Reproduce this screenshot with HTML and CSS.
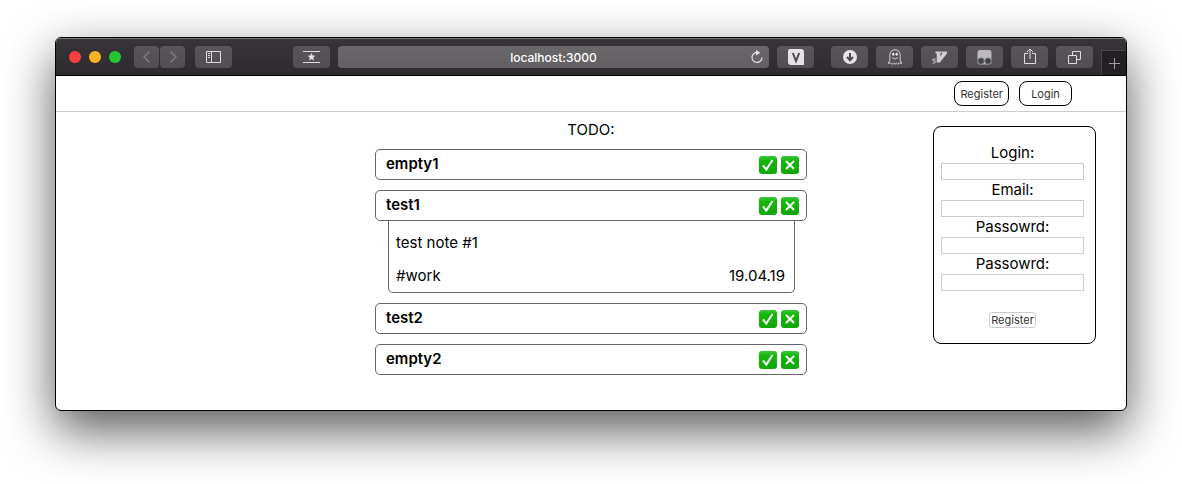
FILE: index.html
```html
<!DOCTYPE html>
<html lang="en">
<head>
<meta charset="utf-8">
<title>TODO</title>
<link rel="stylesheet" href="styles.css">
</head>
<body>
<div class="window">
  <div class="toolbar">
    <div class="lights"><span class="light red"></span><span class="light yellow"></span><span class="light green"></span></div>
    <div class="nav">
      <button class="tool small dim" aria-label="Back"><svg width="8" height="12" viewBox="0 0 8 12"><path d="M6.5 0.5L1 6l5.500 5.500"/></svg></button>
      <button class="tool small dim" aria-label="Forward"><svg width="8" height="12" viewBox="0 0 8 12"><path d="M1.500 0.500L7 6l-5.500 5.500"/></svg></button>
    </div>
    <button class="tool sidebar" aria-label="Sidebar"><svg width="15" height="12" viewBox="0 0 15 12"><path d="M.5.5h14v11H.5zM5.500.500v11M2 2.500h2M2 4.500h2M2 6.500h2"/></svg></button>
    <button class="tool favorites" aria-label="Favorites"><svg width="17" height="12" viewBox="0 0 17 12"><path d="M0 .5h17M0 11.500h17"/><path class="solid" d="M8.500 2l1.100 2.600 2.800.2-2.100 1.800.7 2.800-2.500-1.500L6 9.400l.7-2.800L4.600 4.800l2.800-.2z"/></svg></button>
    <div class="address">
      <span class="url">localhost:3000</span>
      <button class="reload" aria-label="Reload"><svg width="12" height="14" viewBox="0 0 12 14"><path d="M6.500 2.500A5 5 0 1 0 11 7.500"/><path class="solid" d="M5 0l4.500 2.700L5 5.400z"/></svg></button>
    </div>
    <button class="tool" aria-label="V extension"><svg width="16" height="16" viewBox="0 0 16 16"><path class="solid" d="M2 0h11a3 3 0 0 1 3 3v13H3a3 3 0 0 1-3-3V2a2 2 0 0 1 2-2z"/><path class="cut" d="M4.800 4L8 12l3.200-8"/></svg></button>
    <div class="extensions">
      <button class="tool" aria-label="Downloads"><svg width="14" height="14" viewBox="0 0 14 14"><circle class="solid" cx="7" cy="7" r="7"/><path class="cut" d="M7 3v7M4 7l3 3.200L10 7"/></svg></button>
      <button class="tool" aria-label="Ghost"><svg width="16" height="16" viewBox="0 0 16 17"><path d="M2.500 12V6.500C2.500 3 5 .8 8 .8s5.500 2.200 5.500 5.700V12l1.700 3.200-2.500-.4-1.700 1.400L9.500 15 8 16.200 6.500 15 5 16.200l-1.700-1.400-2.500.4zM5 9.200q3 3 6 0"/><ellipse class="solid" cx="6.200" cy="5.500" rx="1.200" ry="1.700"/><ellipse class="solid" cx="9.800" cy="5.500" rx="1.200" ry="1.700"/></svg></button>
      <button class="tool bright" aria-label="Vim keys"><svg width="15" height="13" viewBox="0 0 15 13"><path class="solid" d="M3.500.5h5.700v2h-.9v2.700l2.200-2.700h-.8v-2H15v2L7.800 11.500H4.700v-9H3.500z"/><path d="M3.500 8H1.500q-1 0-1 .8t1.500.9 1.500 1T2.500 12h-2"/></svg></button>
      <button class="tool muted" aria-label="Robot"><svg width="15" height="15" viewBox="0 0 15 15"><path class="solid" d="M3 0h9q2.500 0 2.500 3v9q0 2.500-2.500 2.500H3Q.5 14.500.5 12V3Q.5 0 3 0z"/><circle class="hole" cx="4" cy="11" r="3.100"/><circle class="hole" cx="11" cy="11" r="3.100"/></svg></button>
      <button class="tool share" aria-label="Share"><svg width="12" height="16" viewBox="0 0 12 16"><path d="M4 5.500H.5v10h11v-10H8M6 11V1M3 4l3-3 3 3"/></svg></button>
      <button class="tool" aria-label="Tabs"><svg width="13" height="13" viewBox="0 0 13 13"><path d="M.5 4.500h8v8h-8zM4.500 4V.500h8v8H9"/></svg></button>
    </div>
    <button class="newtab" aria-label="New tab"><svg width="11" height="11" viewBox="0 0 11 11"><path d="M5.500 0v11M0 5.500h11"/></svg></button>
  </div>

  <header class="header">
    <button class="pill">Register</button>
    <button class="pill">Login</button>
  </header>

  <main class="content">
    <section class="todo">
      <h1 class="title">TODO:</h1>
      <article class="item">
        <div class="bar"><h2 class="name">empty1</h2>
          <button class="mark" aria-label="Done"><svg width="18" height="18" viewBox="0 0 18 18"><path d="M4 9.500l3.300 4L13.500 4"/></svg></button>
          <button class="mark" aria-label="Delete"><svg width="18" height="18" viewBox="0 0 18 18"><path d="M5 5l8 8M13 5l-8 8"/></svg></button></div>
      </article>
      <article class="item">
        <div class="bar"><h2 class="name">test1</h2>
          <button class="mark" aria-label="Done"><svg width="18" height="18" viewBox="0 0 18 18"><path d="M4 9.500l3.300 4L13.500 4"/></svg></button>
          <button class="mark" aria-label="Delete"><svg width="18" height="18" viewBox="0 0 18 18"><path d="M5 5l8 8M13 5l-8 8"/></svg></button></div>
        <div class="note">
          <p class="text">test note #1</p>
          <div class="meta"><span>#work</span><time datetime="2019-04-19">19.04.19</time></div>
        </div>
      </article>
      <article class="item">
        <div class="bar"><h2 class="name">test2</h2>
          <button class="mark" aria-label="Done"><svg width="18" height="18" viewBox="0 0 18 18"><path d="M4 9.500l3.300 4L13.500 4"/></svg></button>
          <button class="mark" aria-label="Delete"><svg width="18" height="18" viewBox="0 0 18 18"><path d="M5 5l8 8M13 5l-8 8"/></svg></button></div>
      </article>
      <article class="item">
        <div class="bar"><h2 class="name">empty2</h2>
          <button class="mark" aria-label="Done"><svg width="18" height="18" viewBox="0 0 18 18"><path d="M4 9.500l3.300 4L13.500 4"/></svg></button>
          <button class="mark" aria-label="Delete"><svg width="18" height="18" viewBox="0 0 18 18"><path d="M5 5l8 8M13 5l-8 8"/></svg></button></div>
      </article>
    </section>

    <form class="register">
      <label class="label" for="login">Login:</label>
      <input class="field" id="login" type="text">
      <label class="label" for="email">Email:</label>
      <input class="field" id="email" type="email">
      <label class="label" for="password">Passowrd:</label>
      <input class="field" id="password" type="password">
      <label class="label" for="repeat">Passowrd:</label>
      <input class="field" id="repeat" type="password">
      <button class="submit" type="button">Register</button>
    </form>
  </main>
</div>
</body>
</html>
```
FILE: styles.css
```css
* { box-sizing: border-box; }

body {
  margin: 0;
  padding: 37px 55px 73px;
  background: #fff;
  color: #000;
  font-family: Inter, "Liberation Sans", sans-serif;
}

h1, h2, p { margin: 0; }

button {
  padding: 0;
  border: 0;
  background: none;
  font-family: inherit;
  color: inherit;
}

svg {
  display: block;
  fill: none;
  stroke: #dddbdf;
  stroke-width: 1;
}

.window {
  overflow: hidden;
  border: 1px solid #000;
  border-radius: 6px;
  background: #fff;
  box-shadow: 0 19px 50px rgba(0, 0, 0, 0.66);
}

/* Browser toolbar */
.toolbar {
  display: flex;
  align-items: center;
  height: 38px;
  padding-left: 13px;
  gap: 8px;
  border-top: 1px solid #717074;
  border-bottom: 1px solid #000;
  background: linear-gradient(#38353a, #2d2b2e);
}

.lights { display: flex; gap: 8px; margin-right: 5px; }
.light { width: 12px; height: 12px; border-radius: 50%; }
.red { background: #ff3e41; }
.yellow { background: #ffb125; }
.green { background: #27c732; }

.nav { display: flex; gap: 1px; margin-right: 2px; }

.tool {
  display: flex;
  flex: none;
  align-items: center;
  justify-content: center;
  width: 37px;
  height: 22px;
  border-radius: 4px;
  background: linear-gradient(#59565b, #504e52);
}

.small { width: 25px; }
.dim svg { stroke: #7c7a7e; stroke-width: 1.5; }
.sidebar { margin-right: auto; }
.share { padding-bottom: 2px; }

.solid { fill: #e4e2e6; stroke: none; }
.cut { stroke: #4c4a4f; stroke-width: 2; }
.bright svg { stroke: #d0ced2; }
.bright .solid { fill: #d0ced2; }
.muted .solid { fill: #bcbabf; }
.hole { fill: #444246; stroke: #77757a; }

.address {
  display: flex;
  align-items: center;
  width: 431px;
  height: 22px;
  padding: 0 6px 0 18px;
  border-radius: 4px;
  background: linear-gradient(#696769, #626062);
}

.url {
  flex: 1;
  color: #fff;
  font-size: 12px;
  font-weight: 500;
  text-align: center;
}

.reload svg { stroke-width: 1.3; }

.extensions { display: flex; gap: 8px; margin-left: 9px; }

.newtab {
  display: flex;
  align-items: center;
  justify-content: center;
  align-self: flex-end;
  width: 25px;
  height: 25px;
  border-top: 1px solid #48464a;
  border-left: 1px solid #48464a;
  background: #222023;
}

.newtab svg { stroke: #a09ea2; }

/* Page header */
.header {
  display: flex;
  justify-content: flex-end;
  gap: 10px;
  padding: 5px 54px;
  border-bottom: 1px solid #ccc;
}

.pill {
  min-width: 53px;
  height: 25px;
  padding: 0 5px;
  border: 1px solid #000;
  border-radius: 8px;
  color: #333;
  font-size: 11px;
}

.content {
  display: grid;
  grid-template-columns: 1fr 432px 1fr;
  align-items: start;
  min-height: 298px;
}

/* Todo list */
.todo {
  display: flex;
  flex-direction: column;
  grid-column: 2;
  gap: 10px;
  padding-top: 8px;
}

.title {
  font-size: 15px;
  font-weight: 400;
  line-height: 19px;
  text-align: center;
}

.bar {
  display: flex;
  align-items: center;
  gap: 4px;
  height: 31px;
  padding: 0 7px 0 10px;
  border: 1px solid #666;
  border-radius: 5px;
}

.name {
  flex: 1;
  padding-bottom: 2px;
  font-size: 15px;
  font-weight: 600;
  line-height: 18px;
}

.mark {
  border-radius: 3px;
  background: linear-gradient(#3cc63c, #14b80a 25%, #12a606);
}

.mark svg { stroke: #fff; stroke-width: 2; }

.note {
  display: flex;
  flex-direction: column;
  gap: 13px;
  margin: 0 12px 0 13px;
  padding: 12px 9px 6px 7px;
  border: 1px solid #666;
  border-top: 0;
  border-radius: 0 0 5px 5px;
  font-size: 15px;
  line-height: 20px;
}

.meta { display: flex; justify-content: space-between; }

/* Registration form */
.register {
  display: flex;
  flex-direction: column;
  justify-self: end;
  width: 163px;
  margin: 14px 30px 0 0;
  padding: 16px 11px 15px 7px;
  border: 1px solid #000;
  border-radius: 8px;
}

.label {
  font-size: 15px;
  line-height: 20px;
  text-align: center;
}

.field {
  width: 100%;
  height: 17px;
  padding: 0 2px;
  border: 1px solid #ccc;
  background: #fff;
  font-size: 11px;
}

.submit {
  align-self: center;
  height: 16px;
  margin-top: 21px;
  padding: 0 1px;
  border: 1px solid #ccc;
  border-radius: 3px;
  color: #333;
  font-size: 11px;
  line-height: 14px;
}
```
